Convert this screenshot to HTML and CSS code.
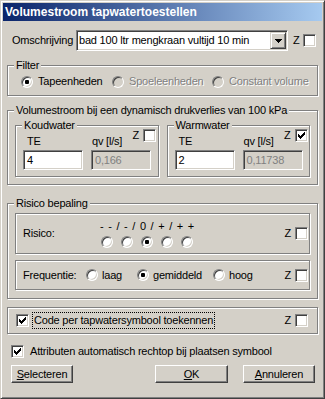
FILE: index.html
```html
<!DOCTYPE html>
<html lang="nl">
<head>
    <meta charset="UTF-8">
    <title>Volumestroom tapwatertoestellen</title>
    <link rel="stylesheet" href="styles.css">
</head>
<body>
    <div class="window">
        <div class="titlebar">Volumestroom tapwatertoestellen</div>
        <div class="client">

            <div class="omschr-row">
                <span class="omschr-label">Omschrijving</span>
                <div class="combo">
                    <span class="combo-text">bad 100 ltr mengkraan vultijd 10 min</span>
                    <span class="combo-btn">
                        <svg width="7" height="4" viewBox="0 0 7 4" shape-rendering="crispEdges"><path d="M0 0h7v1H0zM1 1h5v1H1zM2 2h3v1H2zM3 3h1v1H3z"/></svg>
                    </span>
                </div>
                <span class="zcheck"><span class="z">Z</span><span class="check"></span></span>
            </div>

            <fieldset class="group filter">
                <legend>Filter</legend>
                <div class="filter-row">
                    <span class="opt opt-tape"><span class="radio on"></span>Tapeenheden</span>
                    <span class="opt opt-spoel disabled"><span class="radio"></span>Spoeleenheden</span>
                    <span class="opt disabled"><span class="radio"></span>Constant volume</span>
                </div>
            </fieldset>

            <fieldset class="group volume">
                <legend>Volumestroom bij een dynamisch drukverlies van 100 kPa</legend>
                <div class="volume-row">
                    <fieldset class="group water">
                        <legend>Koudwater</legend>
                        <div class="water-grid">
                            <span class="te-label">TE</span>
                            <span class="qv-label">qv [l/s]</span>
                            <span class="zcheck water-z"><span class="z">Z</span><span class="check"></span></span>
                            <span class="edit">4</span>
                            <span class="edit readonly">0,166</span>
                        </div>
                    </fieldset>
                    <fieldset class="group water">
                        <legend>Warmwater</legend>
                        <div class="water-grid">
                            <span class="te-label">TE</span>
                            <span class="qv-label">qv [l/s]</span>
                            <span class="zcheck water-z"><span class="z">Z</span><span class="check">
                                <svg width="11" height="11" viewBox="0 0 11 11" shape-rendering="crispEdges"><path d="M2 4h1v3H2zM3 5h1v3H3zM4 6h1v3H4zM5 5h1v3H5zM6 4h1v3H6zM7 3h1v3H7zM8 2h1v3H8z"/></svg>
                            </span></span>
                            <span class="edit">2</span>
                            <span class="edit readonly">0,11738</span>
                        </div>
                    </fieldset>
                </div>
            </fieldset>

            <fieldset class="group risico">
                <legend>Risico bepaling</legend>
                <div class="risico-inner">
                    <div class="frame risico-box">
                        <span class="risico-label">Risico:</span>
                        <div class="scale">
                            <div class="scale-text">- - / - / 0 / + / + +</div>
                            <div class="scale-radios">
                                <span class="radio"></span>
                                <span class="radio"></span>
                                <span class="radio on"></span>
                                <span class="radio"></span>
                                <span class="radio"></span>
                            </div>
                        </div>
                        <span class="zcheck"><span class="z">Z</span><span class="check"></span></span>
                    </div>
                    <div class="frame freq-box">
                        <span class="freq-label">Frequentie:</span>
                        <span class="opt freq-laag"><span class="radio"></span>laag</span>
                        <span class="opt freq-gem"><span class="radio on"></span>gemiddeld</span>
                        <span class="opt"><span class="radio"></span>hoog</span>
                        <span class="zcheck"><span class="z">Z</span><span class="check"></span></span>
                    </div>
                </div>
            </fieldset>

            <div class="frame code-box">
                <span class="check">
                    <svg width="11" height="11" viewBox="0 0 11 11" shape-rendering="crispEdges"><path d="M2 4h1v3H2zM3 5h1v3H3zM4 6h1v3H4zM5 5h1v3H5zM6 4h1v3H6zM7 3h1v3H7zM8 2h1v3H8z"/></svg>
                </span>
                <span class="focus-text">Code per tapwatersymbool toekennen</span>
                <span class="zcheck"><span class="z">Z</span><span class="check"></span></span>
            </div>

            <div class="attr-row">
                <span class="check">
                    <svg width="11" height="11" viewBox="0 0 11 11" shape-rendering="crispEdges"><path d="M2 4h1v3H2zM3 5h1v3H3zM4 6h1v3H4zM5 5h1v3H5zM6 4h1v3H6zM7 3h1v3H7zM8 2h1v3H8z"/></svg>
                </span>
                <span class="attr-text">Attributen automatisch rechtop bij plaatsen symbool</span>
            </div>

            <div class="button-row">
                <span class="button btn-select"><u>S</u>electeren</span>
                <span class="button btn-ok"><u>O</u>K</span>
                <span class="button btn-cancel"><u>A</u>nnuleren</span>
            </div>

        </div>
    </div>
</body>
</html>
```

FILE: styles.css
```css
* {
    box-sizing: border-box;
}

body {
    margin: 0;
    background: #d4d0c8;
    font-family: "Liberation Sans", Arial, sans-serif;
    font-size: 11px;
    line-height: 13px;
    letter-spacing: -0.2px;
    color: #000;
}

/* window frame */
.window {
    width: 325px;
    height: 399px;
    padding: 2px;
    display: flex;
    flex-direction: column;
    background: #d4d0c8;
    border: 1px solid;
    border-color: #d4d0c8 #404040 #404040 #d4d0c8;
    box-shadow: inset 1px 1px #fff, inset -1px -1px #808080;
}

.titlebar {
    height: 18px;
    padding-left: 2px;
    background: linear-gradient(to right, #0a246a, #a6caf0);
    color: #fff;
    font-weight: bold;
    font-size: 12px;
    line-height: 18px;
    letter-spacing: 0;
}

.client {
    flex: 1;
    padding: 0 4px;
    display: flex;
    flex-direction: column;
}

/* shared controls */
.sunken {
    border: 1px solid;
}

.check,
.edit,
.combo {
    border: 1px solid;
    border-color: #808080 #fff #fff #808080;
    box-shadow: inset 1px 1px #404040, inset -1px -1px #d4d0c8;
    background: #fff;
}

.check {
    display: block;
    flex: none;
    width: 13px;
    height: 13px;
}

.check svg {
    display: block;
}

.radio {
    display: inline-block;
    flex: none;
    position: relative;
    width: 12px;
    height: 12px;
    border-radius: 50%;
    border: 1px solid;
    border-color: #808080 #fff #fff #808080;
    box-shadow: inset 1px 1px #404040, inset -1px -1px #d4d0c8;
    background: #fff;
}

.radio.on::after {
    content: "";
    position: absolute;
    left: 3px;
    top: 3px;
    width: 4px;
    height: 4px;
    border-radius: 1px;
    background: #000;
}

.disabled .radio {
    background: #d4d0c8;
}

.disabled {
    color: #808080;
    text-shadow: 1px 1px 0 #fff;
}

.opt {
    display: flex;
    align-items: center;
    gap: 4px;
}

.zcheck {
    display: flex;
    align-items: center;
    gap: 4px;
}

.z {
    line-height: 13px;
}

/* etched group boxes */
.group {
    margin: 0;
    padding: 0;
    min-width: 0;
    border: 1px solid #808080;
    box-shadow: 1px 1px #fff, inset 1px 1px #fff;
}

.group legend {
    margin-left: 6px;
    padding: 0 2px;
    line-height: 13px;
    background: #d4d0c8;
}

.frame {
    border: 1px solid #808080;
    box-shadow: 1px 1px #fff, inset 1px 1px #fff;
}

/* omschrijving */
.omschr-row {
    display: flex;
    align-items: center;
    height: 21px;
    margin-top: 9px;
    padding-left: 5px;
}

.omschr-label {
    width: 64px;
    flex: none;
}

.combo {
    width: 212px;
    height: 21px;
    padding: 1px;
    display: flex;
    align-items: center;
}

.combo-text {
    flex: 1;
    padding-left: 1px;
    white-space: nowrap;
}

.combo-btn {
    width: 16px;
    height: 17px;
    display: flex;
    align-items: center;
    justify-content: center;
    background: #d4d0c8;
    border: 1px solid;
    border-color: #d4d0c8 #404040 #404040 #d4d0c8;
    box-shadow: inset 1px 1px #fff, inset -1px -1px #808080;
}

.combo-btn svg {
    display: block;
}

.omschr-row .zcheck {
    margin-left: 5px;
    gap: 3px;
}

/* filter */
.filter {
    margin-top: 8px;
}

.filter-row {
    display: flex;
    padding: 3px 0 7px 13px;
}

.filter .opt {
    gap: 5px;
}

.opt-tape {
    width: 91px;
}

.opt-spoel {
    width: 100px;
}

/* volumestroom */
.volume {
    margin-top: 8px;
}

.volume-row {
    display: flex;
    gap: 8px;
    padding: 2px 7px 7px 7px;
}

.water {
    width: 144px;
}

.water-grid {
    display: grid;
    grid-template-columns: 60px 60px;
    column-gap: 8px;
    row-gap: 2px;
    padding: 3px 7px 6px 7px;
}

.te-label {
    grid-column: 1;
    grid-row: 1;
    padding-left: 4px;
}

.qv-label {
    grid-column: 2;
    grid-row: 1;
    padding-left: 1px;
}

.water-z {
    grid-column: 2;
    grid-row: 1;
    justify-self: end;
    align-self: start;
    margin-top: -6px;
    margin-right: -5px;
}

.edit {
    height: 20px;
    padding: 2px 3px;
    line-height: 14px;
}

.edit.readonly {
    background: #d4d0c8;
    color: #808080;
}

/* risico */
.risico {
    margin-top: 12px;
}

.risico-inner {
    padding: 3px 7px 8px 7px;
    display: flex;
    flex-direction: column;
    gap: 6px;
}

.risico-box {
    display: flex;
    align-items: center;
    height: 41px;
    padding: 0 1px 0 7px;
}

.risico-label {
    width: 77px;
    flex: none;
}

.scale {
    flex: 1;
}

.scale-text {
    letter-spacing: 0.75px;
    white-space: nowrap;
}

.scale-radios {
    display: flex;
    gap: 8px;
    margin-top: 3px;
    padding-left: 1px;
}

.freq-box {
    display: flex;
    align-items: center;
    height: 30px;
    padding: 0 1px 0 7px;
}

.freq-label {
    width: 63px;
    flex: none;
}

.freq-laag {
    width: 51px;
}

.freq-gem {
    width: 76px;
}

.freq-box .zcheck,
.risico-box .zcheck {
    margin-left: auto;
}

/* code per symbool */
.code-box {
    display: flex;
    align-items: center;
    height: 27px;
    margin-top: 8px;
    padding: 0 9px 0 8px;
}

.focus-text {
    margin-left: 4px;
    padding: 1px 1px;
    outline: 1px dotted #000;
    white-space: nowrap;
}

.code-box .zcheck {
    margin-left: auto;
}

.attr-row {
    display: flex;
    align-items: center;
    margin-top: 11px;
    padding-left: 4px;
}

.attr-text {
    margin-left: 6px;
    white-space: nowrap;
}

/* buttons */
.button-row {
    display: flex;
    margin-top: 7px;
    padding: 0 3px 0 4px;
}

.button {
    height: 18px;
    display: flex;
    align-items: center;
    justify-content: center;
    background: #d4d0c8;
    border: 1px solid;
    border-color: #fff #404040 #404040 #fff;
    box-shadow: inset -1px -1px #808080;
}

.btn-select {
    width: 62px;
}

.btn-ok {
    width: 73px;
    margin-left: auto;
}

.btn-cancel {
    width: 72px;
    margin-left: 15px;
}
```
